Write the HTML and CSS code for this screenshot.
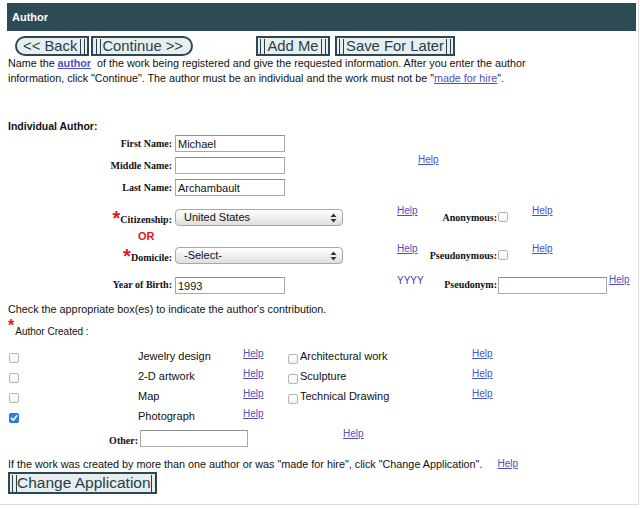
FILE: index.html
```html
<!DOCTYPE html>
<html>
<head>
<meta charset="utf-8">
<link rel="stylesheet" href="styles.css">
</head>
<body>
<div class="frame">
  <div class="titlebar">Author</div>
  <div class="nav">
    <button class="btn back"><span>&lt;&lt; Back</span><i class="bars"></i></button>
    <button class="btn cont"><i class="bars"></i><span>Continue &gt;&gt;</span></button>
    <button class="btn sq add"><i class="bars"></i><span>Add Me</span><i class="bars"></i></button>
    <button class="btn sq save"><i class="bars"></i><span>Save For Later</span><i class="bars"></i></button>
  </div>
  <p class="intro">Name the <a class="lnk strong" href="#">author</a>&nbsp; of the work being registered and give the requested information. After you enter the author<br>information, click "Continue". The author must be an individual and the work must not be "<a class="lnk" href="#">made for hire</a>".</p>

  <div class="sec-title">Individual Author:</div>

  <div class="agrid">
    <label class="lbl r1">First Name:</label>
    <input class="txt r1c2" type="text" value="Michael">

    <label class="lbl r2">Middle Name:</label>
    <input class="txt r2c2" type="text" value="">
    <a class="help help-mid" href="#">Help</a>

    <label class="lbl r3">Last Name:</label>
    <input class="txt r3c2" type="text" value="Archambault">

    <label class="lbl r4 starred"><span class="star">*</span>Citizenship:</label>
    <span class="sel r4c2"><select><option>United States</option></select><svg class="arr" width="7" height="10" viewBox="0 0 7 10"><path d="M3.5 0.5 L6.5 4 H0.5 Z M3.5 9.5 L6.5 6 H0.5 Z" fill="#333"/></svg></span>
    <a class="help r4c3" href="#">Help</a>
    <label class="lbl2 r4c4">Anonymous:</label>
    <span class="cb r4c5"></span>
    <a class="help r4c6" href="#">Help</a>

    <div class="or">OR</div>

    <label class="lbl r6 starred"><span class="star">*</span>Domicile:</label>
    <span class="sel r6c2"><select><option>-Select-</option></select><svg class="arr" width="7" height="10" viewBox="0 0 7 10"><path d="M3.5 0.5 L6.5 4 H0.5 Z M3.5 9.5 L6.5 6 H0.5 Z" fill="#333"/></svg></span>
    <a class="help r6c3" href="#">Help</a>
    <label class="lbl2 r6c4">Pseudonymous:</label>
    <span class="cb r6c5"></span>
    <a class="help r6c6" href="#">Help</a>

    <label class="lbl r7">Year of Birth:</label>
    <input class="txt r7c2" type="text" value="1993">
    <span class="yyyy">YYYY</span>
    <label class="lbl2 r7c4">Pseudonym:</label>
    <input class="txt pseud" type="text" value="">
    <a class="help r7c7" href="#">Help</a>
  </div>

  <p class="instr">Check the appropriate box(es) to indicate the author's contribution.</p>
  <div class="req"><span class="star-sm">*</span><span class="req-text">Author Created :</span></div>

  <div class="wgrid">
    <span class="cb"></span><span class="wlbl">Jewelry design</span><a class="help whelp" href="#">Help</a><span class="cb cb2"></span><span class="wlbl">Architectural work</span><a class="help whelp" href="#">Help</a>
    <span class="cb"></span><span class="wlbl">2-D artwork</span><a class="help whelp" href="#">Help</a><span class="cb cb2"></span><span class="wlbl">Sculpture</span><a class="help whelp" href="#">Help</a>
    <span class="cb"></span><span class="wlbl">Map</span><a class="help whelp" href="#">Help</a><span class="cb cb2"></span><span class="wlbl">Technical Drawing</span><a class="help whelp" href="#">Help</a>
    <span class="cb checked"><svg width="10" height="10" viewBox="0 0 10 10"><path d="M2.3 5.2 L4.2 7.2 L7.8 2.8" fill="none" stroke="#fff" stroke-width="1.6" stroke-linecap="round" stroke-linejoin="round"/></svg></span><span class="wlbl">Photograph</span><a class="help whelp" href="#">Help</a>
  </div>

  <div class="other-row">
    <label class="lbl other-lbl">Other:</label>
    <input class="txt other-in" type="text" value="">
    <a class="help other-help" href="#">Help</a>
  </div>

  <p class="bottom">If the work was created by more than one author or was "made for hire", click "Change Application". <a class="help bottom-help" href="#">Help</a></p>
  <button class="btn sq change"><i class="bars"></i><span>Change Application</span><i class="bars"></i></button>
</div>
</body>
</html>
```
FILE: styles.css
```css
html, body {
  margin: 0;
  padding: 0;
  background: #fff;
}
body {
  font-family: "Liberation Sans", Arial, sans-serif;
  font-size: 10.8px;
  color: #111;
}
.frame {
  box-sizing: border-box;
  width: 639px;
  height: 507px;
  padding: 3px 0 0 8px;
  border-top: 2px solid #f0f0f0;
  border-right: 1px solid #dcdcdc;
  border-bottom: 1px solid #dcdcdc;
  margin-top: -2px;
  overflow: hidden;
}
.titlebar {
  margin-left: -1px;
  width: 629px;
  height: 28px;
  background: #2e4a54;
  color: #fff;
  font-weight: bold;
  font-size: 11px;
  line-height: 28px;
  padding-left: 5px;
  box-sizing: border-box;
}
.nav {
  display: flex;
  margin-top: 5px;
  padding-left: 7px;
  height: 20px;
}
.btn {
  display: inline-flex;
  align-items: center;
  justify-content: space-between;
  box-sizing: border-box;
  height: 20px;
  border: 2px solid #2e4852;
  background: #e8edef;
  color: #263f49;
  font-family: "Liberation Sans", Arial, sans-serif;
  font-size: 14.8px;
  line-height: 16px;
  padding: 0 2px;
  margin: 0;
  white-space: nowrap;
}
.bars {
  display: inline-block;
  flex: none;
  width: 5px;
  height: 15px;
  box-sizing: border-box;
  border-left: 1.5px solid #263f49;
  border-right: 1.5px solid #263f49;
}
.back {
  width: 74px;
  border-radius: 10px 0 0 10px;
  padding-left: 6px;
  padding-right: 2px;
}
.cont {
  width: 102px;
  margin-left: 2px;
  border-radius: 0 10px 10px 0;
  padding-left: 3px;
  padding-right: 8px;
}
.add {
  width: 74px;
  margin-left: 63px;
}
.save {
  width: 120px;
  margin-left: 5px;
}
.intro {
  margin: 0;
  font-size: 10.75px;
  line-height: 15px;
  white-space: nowrap;
}
.lnk {
  color: #4f4fc4;
}
.strong {
  font-weight: bold;
}
.sec-title {
  margin-top: 34px;
  font-weight: bold;
  font-size: 10.5px;
  line-height: 13px;
}
.agrid {
  margin-top: 2px;
  display: grid;
  grid-template-columns: 167px 222px 30px 71px 34px 77px 1fr;
  grid-template-rows: 22px 22px 30px 22px 16px 30px 17px;
  align-items: start;
}
.lbl {
  font-family: "Liberation Serif", "Times New Roman", serif;
  font-weight: bold;
  font-size: 10px;
  line-height: 17px;
  text-align: right;
  padding-right: 3px;
  grid-column: 1;
  white-space: nowrap;
}
.lbl2 {
  font-family: "Liberation Serif", "Times New Roman", serif;
  font-weight: bold;
  font-size: 10px;
  line-height: 17px;
  text-align: right;
  padding-right: 1px;
  grid-column: 4;
  white-space: nowrap;
}
.r1 { grid-row: 1; }
.r2 { grid-row: 2; }
.r3 { grid-row: 3; }
.r4 { grid-row: 4; }
.r6 { grid-row: 6; }
.r7 { grid-row: 7; margin-top: -1px; }
.starred { margin-top: 2px; }
.star {
  color: #e8141b;
  font-family: "Liberation Sans", Arial, sans-serif;
  font-weight: bold;
  font-size: 20px;
  line-height: 0;
  position: relative;
  top: 2px;
}
.txt {
  box-sizing: border-box;
  width: 110px;
  height: 17px;
  margin: 0;
  border: 1px solid #a9a9a9;
  border-top-color: #8f8f8f;
  padding: 0 2px;
  font-family: "Liberation Sans", Arial, sans-serif;
  font-size: 11px;
  color: #111;
  background: #fff;
}
.r1c2 { grid-row: 1; grid-column: 2; }
.r2c2 { grid-row: 2; grid-column: 2; }
.r3c2 { grid-row: 3; grid-column: 2; }
.r7c2 { grid-row: 7; grid-column: 2; }
.help {
  color: #4f4fc4;
  font-size: 10px;
  line-height: 12px;
  text-decoration: underline;
  white-space: nowrap;
  justify-self: start;
}
.help-mid {
  grid-row: 2;
  grid-column: 3 / span 2;
  margin-left: 21px;
  margin-top: -3px;
}
.sel {
  position: relative;
  display: block;
  width: 168px;
  height: 17px;
}
.sel select {
  -webkit-appearance: none;
  appearance: none;
  box-sizing: border-box;
  width: 168px;
  height: 17px;
  margin: 0;
  border: 1px solid #a8a8a8;
  border-radius: 4px;
  background: linear-gradient(#ffffff, #f1f1f1 45%, #dedede);
  padding: 0 0 0 8px;
  font-family: "Liberation Sans", Arial, sans-serif;
  font-size: 11px;
  color: #111;
  line-height: 15px;
}
.arr {
  position: absolute;
  right: 6px;
  top: 3.5px;
}
.r4c2 { grid-row: 4; grid-column: 2; }
.r6c2 { grid-row: 6; grid-column: 2; }
.r4c3 { grid-row: 4; grid-column: 3; margin-top: -4px; }
.r6c3 { grid-row: 6; grid-column: 3; margin-top: -4.5px; }
.r4c4 { grid-row: 4; }
.r6c4 { grid-row: 6; }
.r7c4 { grid-row: 7; margin-top: -1px; }
.r4c5 { grid-row: 4; grid-column: 5; margin-top: 3px; }
.r6c5 { grid-row: 6; grid-column: 5; margin-top: 3px; }
.r4c6 { grid-row: 4; grid-column: 6; margin-top: -4px; }
.r6c6 { grid-row: 6; grid-column: 6; margin-top: -4.5px; }
.cb {
  display: block;
  box-sizing: border-box;
  width: 10px;
  height: 10px;
  border: 1px solid #b5b5b5;
  border-radius: 2px;
  background: linear-gradient(#ffffff, #f3f3f3);
}
.cb.checked {
  background: #2d7fe6;
  border-color: #2570d0;
}
.cb.checked svg {
  display: block;
  margin: -1px 0 0 -1px;
}
.or {
  grid-row: 5;
  grid-column: 1;
  padding-left: 130px;
  color: #e8141b;
  font-weight: bold;
  font-size: 11px;
  line-height: 13px;
  margin-top: -1px;
}
.yyyy {
  grid-row: 7;
  grid-column: 3;
  color: #3c3cb4;
  font-size: 10px;
  line-height: 12px;
  margin-top: -2px;
}
.pseud {
  grid-row: 7;
  grid-column: 5 / span 2;
  width: 109px;
}
.r7c7 { grid-row: 7; grid-column: 7; margin-top: -3.5px; margin-left: 0; }
.instr {
  margin: 8px 0 0 0;
  line-height: 14px;
}
.req {
  display: flex;
  align-items: flex-start;
  margin-top: 5px;
  height: 17px;
}
.star-sm {
  color: #e8141b;
  font-weight: bold;
  font-size: 16px;
  line-height: 10px;
}
.req-text {
  margin-top: 5px;
  margin-left: 1px;
  font-size: 10px;
  line-height: 12px;
}
.wgrid {
  margin-top: 12px;
  display: grid;
  grid-template-columns: 130px 105px 45px 12px 172px 1fr;
  grid-auto-rows: 20px;
  align-items: start;
}
.wgrid > .cb {
  margin: 3px 0 0 1px;
}
.wgrid > .cb2 {
  margin: 4px 0 0 0;
}
.wlbl {
  font-size: 11px;
  line-height: 14px;
  margin-top: -1px;
  white-space: nowrap;
}
.whelp {
  margin-top: -2px;
}
.other-row {
  display: grid;
  grid-template-columns: 132px 203px 1fr;
  align-items: start;
  height: 17px;
}
.other-lbl {
  margin-top: 2px;
  padding-right: 2px;
}
.other-in {
  width: 108px;
}
.other-help {
  margin-top: -2.5px;
}
.bottom {
  margin: 10px 0 0 0;
  line-height: 14px;
  white-space: nowrap;
}
.bottom-help {
  margin-left: 12px;
  vertical-align: 1px;
}
.change {
  margin-top: 1px;
  width: 149px;
  height: 22px;
  font-size: 15.5px;
  padding: 0 2px;
}
.change .bars {
  height: 17px;
}
```
